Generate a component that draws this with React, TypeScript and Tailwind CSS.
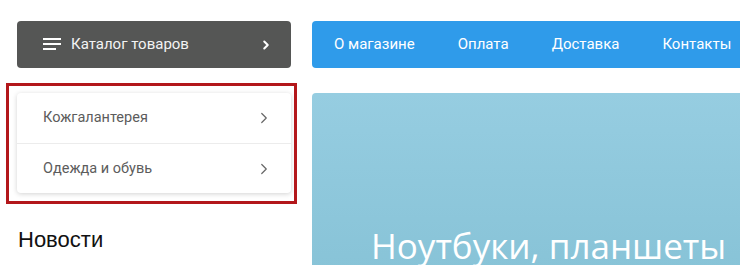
import { ChevronRight } from "lucide-react";

const navItems = ["О магазине", "Оплата", "Доставка", "Контакты"];
const categories = ["Кожгалантерея", "Одежда и обувь"];

export default function App() {
  return (
    <div className="relative w-[740px] h-[265px] overflow-hidden bg-white font-['Roboto',sans-serif]">
      <div className="flex gap-[21px] pl-[17px] pt-[21px]">
        {/* Left column */}
        <div className="w-[274px] shrink-0">
          <button className="flex items-center w-full h-[47px] rounded-[4px] bg-[#555655] pl-[26px] pr-[18px] text-[15px] text-[#f3f3f3]">
            <svg width="18" height="13" viewBox="0 0 18 13" className="mr-[10px]">
              <rect x="0" y="0" width="18" height="2" fill="#fff" />
              <rect x="0" y="5" width="18" height="2" fill="#fff" />
              <rect x="0" y="10" width="13" height="2" fill="#fff" />
            </svg>
            <span>Каталог товаров</span>
            <ChevronRight className="ml-auto" size={14} strokeWidth={3.5} color="#fff" />
          </button>

          <div className="mt-[25px] bg-white rounded-[4px] shadow-[0_1px_5px_rgba(0,0,0,0.18)]">
            {categories.map((c, i) => (
              <div
                key={c}
                className={
                  "flex items-center h-[50px] pl-[26px] pr-[18px] text-[14.5px] text-[#5c5c5c]" +
                  (i > 0 ? " border-t border-[#ececec]" : "")
                }
              >
                <span>{c}</span>
                <ChevronRight className="ml-auto" size={18} strokeWidth={1.6} color="#666" />
              </div>
            ))}
          </div>

          <h2 className="mt-[30px] pl-[1px] text-[22px] text-[#111] font-['Liberation_Sans',sans-serif]">
            Новости
          </h2>
        </div>

        {/* Right column */}
        <div className="flex-1 min-w-0">
          <nav className="flex items-center gap-[43px] h-[47px] rounded-l-[4px] bg-[#2f9bea] pl-[22px] text-[15px] text-white whitespace-nowrap">
            {navItems.map((n) => (
              <span key={n}>{n}</span>
            ))}
          </nav>

          <div className="mt-[25px] h-[200px] rounded-tl-[4px] bg-gradient-to-b from-[#96cde1] to-[#86c2d6] pl-[59px] pt-[135px]">
            <div className="text-[35px] leading-none text-white whitespace-nowrap font-['Open_Sans',sans-serif]">
              Ноутбуки, планшеты
            </div>
          </div>
        </div>
      </div>

      {/* annotation outline */}
      <div className="absolute left-[6px] top-[83px] w-[291px] h-[121px] border-[3px] border-[#b3171b] pointer-events-none" />
    </div>
  );
}
